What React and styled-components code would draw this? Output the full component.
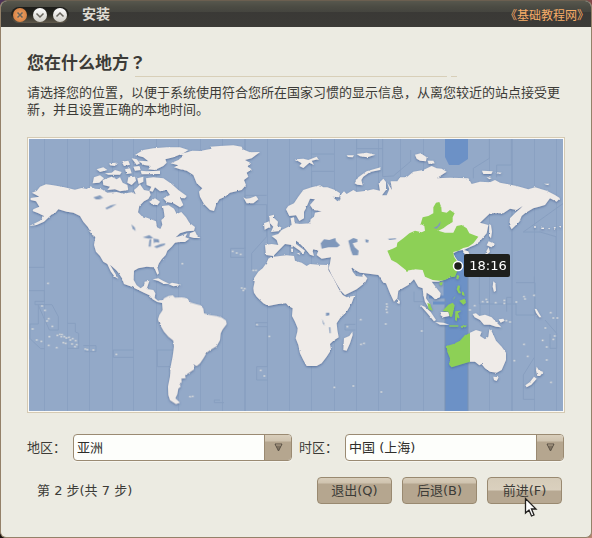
import React from "react";
import styled, { createGlobalStyle } from "styled-components";

const GlobalStyle = createGlobalStyle`
  * { box-sizing: border-box; }
  body {
    margin: 0;
    background: linear-gradient(90deg, #4d3357, #824748) top / 100% 50px no-repeat,
      linear-gradient(90deg, #1a1410, #b98670);
    font-family: "DejaVu Sans", "Noto Sans CJK SC", sans-serif;
    font-size: 13px;
    line-height: 17px;
    color: #3c3b37;
  }
`;

const Window = styled.div`
  min-height: 100vh;
  display: flex;
  flex-direction: column;
  border: 1px solid #948169;
  border-top-color: #6b5f50;
  border-radius: 7px 7px 6px 6px;
  background: #ecebe2;
  overflow: hidden;
`;

const TitleBar = styled.header`
  height: 26px;
  flex: none;
  display: flex;
  align-items: center;
  padding: 0 2px 0 10px;
  background: linear-gradient(#57574d 0, #4b4b43 6px, #45453f 11px, #3a3936 11px, #3c3b37 100%);
`;

const WindowControls = styled.div`
  display: flex;
  gap: 6px;
  padding: 1px 2px;
  margin-top: 1px;
  border-radius: 10px;
  background: linear-gradient(#1d1d1a 0, #25251f 45%, #5f584b 100%);
`;

const ControlButton = styled.button`
  width: 14px;
  height: 14px;
  padding: 0;
  border: 0;
  border-radius: 50%;
  display: flex;
  align-items: center;
  justify-content: center;
  background: ${(p) =>
    p.$close ? "radial-gradient(#efa468, #cf7637)" : "linear-gradient(#fff, #cfcdc6)"};
`;

const WindowTitle = styled.h1`
  margin: 0 auto 0 13px;
  font-size: 14px;
  line-height: 20px;
  font-weight: 700;
  color: #dfdbd2;
`;

const SiteMark = styled.span`
  margin-top: 5px;
  font-size: 12px;
  color: #f7ad68;
`;

const Page = styled.main`
  flex: 1;
  display: flex;
  flex-direction: column;
  padding: 24px 26px 16px;
`;

const Question = styled.h2`
  margin: 0;
  font-family: "DejaVu Sans", "Noto Sans CJK TC", sans-serif;
  font-size: 17px;
  line-height: 24px;
  font-weight: 700;
`;

const Rule = styled.hr`
  width: 60%;
  height: 1px;
  margin: 1px auto 7px;
  border: 0;
  background: linear-gradient(90deg, #d8cfb8 97%, transparent 97%, transparent 98%, #d8cfb8 98%);
`;

const Hint = styled.p`
  margin: 0 0 19px;
`;

const MapFrame = styled.div`
  border: 1px solid #d5cab3;
  padding: 1px;
  background: #fbfaf7;
`;

const MapSvg = styled.svg`
  display: block;
  width: 100%;
  height: auto;
`;

const Fields = styled.div`
  display: grid;
  grid-template-columns: auto 1fr auto 1fr;
  align-items: center;
  column-gap: 7px;
  margin-top: 21px;
  padding-right: 1px;
`;

const FieldLabel = styled.label`
  width: 39px;
  white-space: nowrap;
`;

const Combo = styled.div`
  display: grid;
  grid-template-columns: 1fr 27px;
  height: 27px;
  border: 1px solid #9a8a72;
  border-radius: 4px;
  background: #fdfefb;
  box-shadow: 0 1px 0 #f7f6f0;
  overflow: hidden;
`;

const ComboSelect = styled.select`
  grid-area: 1 / 1 / 2 / 3;
  appearance: none;
  min-width: 0;
  padding: 0 31px 0 3px;
  border: 0;
  background: transparent;
  color: #2f2e2b;
  font: inherit;
  outline: 0;
`;

const ComboArrow = styled.span`
  grid-area: 1 / 2;
  display: flex;
  align-items: center;
  justify-content: center;
  border-left: 1px solid #9a8a72;
  background: linear-gradient(#d9cebb 0, #cfc3af 6px, #b5a68f 7px, #b5a68f 100%);
  pointer-events: none;
`;

const Footer = styled.footer`
  display: flex;
  align-items: center;
  justify-content: space-between;
  margin-top: 16px;
  padding: 0 3px 0 10px;
`;

const Actions = styled.div`
  display: flex;
  gap: 10px;
`;

const ActionSlot = styled.div`
  position: relative;
`;

const ActionButton = styled.button`
  width: 75px;
  height: 27px;
  padding: 0;
  border: 1px solid #998970;
  border-radius: 4px;
  color: #3c3b37;
  font: inherit;
  background: ${(p) =>
    p.$hot
      ? "linear-gradient(#d6ccb9 0, #dad0be 12px, #b7a892 13px, #b7a892 100%)"
      : "linear-gradient(#d8cdba 0, #cfc3af 5px, #b5a68f 6px, #b5a68f 100%)"};
`;

const Cursor = styled.svg`
  position: absolute;
  left: 37px;
  top: 20px;
  pointer-events: none;
`;

/* Map shapes use units of a third of a map pixel; dx and dy place each chart sheet. */
const landSheets = [
  {
    dx: 0, dy: 0,
    shapes: [
      "36 188 50 183 60 170 78 163 100 166 130 171 165 179 185 174 200 177 212 169 225 176 245 178 262 188 290 186 310 191 335 187 347 193 342 180 352 172 360 163 372 180 388 183 392 195 385 207 372 214 358 228 354 247 365 258 385 265 408 274 411 292 421 297 427 284 424 270 434 262 431 240 428 228 446 226 462 236 470 252 484 246 498 262 508 278 525 291 522 302 500 304 480 310 467 322 482 318 502 310 496 322 508 326 495 336 478 336 465 338 455 350 442 362 437 375 425 388 417 400 412 412 417 430 412 434 405 418 400 412 380 410 355 415 342 422 341 450 350 466 362 475 372 467 374 455 388 452 384 465 380 477 400 480 406 490 404 504 414 512 428 510 440 516 430 520 412 516 398 508 388 496 372 488 355 480 335 470 312 462 306 445 295 428 288 420 270 404 284 428 295 446 284 440 272 424 262 402 250 395 240 378 228 365 222 345 226 322 212 305 203 290 190 275 180 258 160 248 140 245 115 238 105 250 94 254 84 264 72 275 50 285 28 288 60 272 72 258 55 250 38 243 40 238 58 230 48 214 32 210 32 204 58 200",
      "345 75 370 60 400 55 440 52 480 52 505 60 490 70 460 82 436 88 440 98 430 108 405 120 385 118 392 108 372 105 355 92 385 94 370 82",
      "362 122 380 124 420 122 420 132 365 133", "378 145 400 142 430 145 455 162 475 180 500 198 495 205 480 204 490 225 480 232 460 220 440 216 430 205 450 195 440 180 420 184 405 172 398 185 388 182 394 170 380 165",
      "248 150 275 140 290 148 300 142 308 158 322 165 325 180 300 184 285 178 262 180 270 170 250 165", "222 142 240 136 252 145 238 158 218 160",
      "255 130 275 128 285 120 305 126 300 134 265 134", "230 118 250 112 262 120 240 126", "268 100 290 98 285 108 270 106", "305 95 325 92 330 104 312 108", "335 85 350 88 360 100 350 105", "340 110 358 108 362 120 345 122", "315 118 330 115 335 130 320 132", "325 142 345 140 348 152 335 165 322 158", "352 145 370 140 370 155 356 162", "388 215 405 205 420 215 412 226 395 222", "510 310 525 304 530 314 541 324 522 324 508 320", "205 300 218 308 230 320 218 316",
      "398 448 415 445 430 453 448 461 432 462 415 453", "446 463 456 458 472 461 482 466 460 469"
    ]
  },
  {
    dx: 390, dy: 0,
    shapes: [
      "62 100 85 90 100 78 90 72 115 66 125 62 150 63 185 56 180 50 210 48 250 46 275 50 278 58 300 67 330 66 305 85 285 90 300 98 293 110 305 118 290 128 295 140 282 150 288 165 275 180 240 188 225 200 208 208 198 225 192 243 180 240 162 222 150 200 147 185 157 175 140 160 130 135 110 122 90 118 72 112 85 106",
      "280 202 288 206 300 205 318 198 325 208 310 220 290 220", "435 88 460 86 475 90 500 80 505 88 485 92 492 105 478 98 460 114 448 108 455 100", "358 258 372 254 372 264 384 275 382 288 394 292 390 303 363 306 370 290 360 280", "342 280 358 274 361 290 344 299", "423 346 429 346 428 352 424 352", "423 356 429 356 429 366 424 366", "440 370 452 368 450 374"
    ]
  },
  {
    dx: 390, dy: 420,
    shapes: ["36 96 42 85 55 78 68 76 75 83 95 82 110 84 122 98 140 103 152 106 160 116 162 130 180 135 200 138 215 143 228 152 230 162 218 178 212 190 210 210 200 228 180 240 170 248 162 262 150 280 140 288 132 284 132 298 118 308 105 316 107 324 94 326 95 338 88 340 92 350 85 356 82 372 76 385 90 398 78 402 60 390 55 375 54 350 60 320 62 290 68 260 72 230 70 212 55 200 42 185 28 160 24 148 28 135 38 120"]
  },
  {
    dx: 690, dy: 0,
    shapes: [
      "62 382 90 378 110 376 132 378 135 392 155 398 170 408 180 402 205 404 235 405 235 420 250 445 265 475 278 495 290 502 313 497 305 520 290 545 270 565 260 580 262 600 266 622 250 632 240 642 243 660 230 680 215 700 200 708 170 708 160 690 150 670 145 645 137 625 142 605 143 595 135 575 126 558 128 535 115 528 108 520 85 522 55 528 40 520 20 500 12 488 10 475 14 455 12 445 25 425 38 415 50 398 55 386",
      "307 605 308 615 300 640 290 662 280 660 282 625 298 618",
      "45 345 65 342 85 345 80 330 65 318 85 312 95 300 115 290 125 285 122 265 132 262 134 280 150 282 180 280 182 268 192 260 195 248 215 244 190 240 180 225 195 208 180 206 168 235 162 245 162 265 148 273 138 256 118 258 108 238 115 228 132 220 145 200 160 180 185 172 210 166 220 172 232 172 255 180 270 190 268 202 248 200 262 214 272 208 270 198 282 184 290 192 310 180 320 186 350 182 370 178 390 182 386 160 400 146 408 156 408 180 396 196 410 196 418 178 412 158 426 180 422 154 442 154 450 142 470 142 490 125 520 120 545 108 560 115 575 116 590 125 560 145 600 143 655 145 665 162 690 155 720 157 735 150 750 158 770 162 800 168 835 178 855 172 890 182 915 195 930 205 920 215 900 205 885 225 850 235 825 250 815 258 808 275 785 298 778 285 780 265 795 250 812 235 818 228 800 240 780 236 760 250 720 250 690 278 715 285 710 310 688 335 675 345 662 350 642 360 655 364 660 378 648 380 638 360 625 362 610 370 615 380 625 395 623 415 615 435 600 442 580 450 565 455 545 455 560 475 572 490 570 502 555 508 545 498 530 488 528 505 538 520 545 540 535 532 525 515 520 495 518 475 505 470 492 448 475 465 445 482 442 505 432 515 420 490 408 460 400 458 385 435 345 430 330 428 315 420 303 410 308 425 318 438 335 440 340 432 352 445 345 458 320 478 285 495 275 485 262 465 245 435 236 415 240 400 243 382 215 386 200 375 205 362 190 358 188 364 192 378 180 374 165 356 145 337 138 332 138 342 165 362 158 372 150 362 125 345 105 342 85 362 70 378 48 375",
      "314 160 325 142 350 124 392 112 390 120 360 126 340 140 334 150 338 166 322 164", "290 76 312 76 308 82 294 81", "320 72 350 68 376 74 352 82 330 79", "495 74 512 70 530 82 528 94 510 92 500 86", "533 92 550 92 554 100 536 102",
      "442 506 450 514 448 522 441 518"
    ]
  },
  {
    dx: 1110, dy: 0,
    shapes: ["298 282 303 286 306 305 303 325 297 318", "296 334 315 342 304 352 290 346", "296 352 300 366 284 378 290 362", "276 122 308 124 304 132 280 132", "315 127 335 128 330 132", "290 141 305 144 298 148", "462 161 478 161 474 166", "432 289 438 289 438 293 432 293", "454 293 462 293 462 297 454 297", "474 294 480 294 478 298", "491 291 498 292 494 297", "507 288 513 288 512 293"]
  },
  {
    dx: 1110, dy: 420,
    shapes: [
      "240 188 258 180 275 185 270 198 285 208 295 200 298 178 304 182 310 194 318 212 335 230 348 248 348 270 335 300 320 308 300 305 285 295 275 282 268 286 255 275 240 275",
      "310 320 326 322 320 333 312 330", "440 290 446 300 460 306 450 318 442 318 438 300", "432 320 440 326 424 344 410 352 406 346 420 336", "248 132 258 130 268 138 285 134 305 142 318 156 334 172 318 170 300 164 282 164 270 150 254 142", "90 104 104 110 122 126 138 150 132 154 112 130", "136 156 160 158 178 164 150 164", "152 126 175 126 178 138 160 142 152 136",
      "434 116 440 118 454 142 448 142 438 128", "310 34 316 40 318 62 312 66 308 50", "326 148 340 146 344 152 332 158"
    ]
  }
];

const greenSheets = [
  {
    dx: 1110, dy: 0,
    shapes: ["-8 362 8 356 20 350 22 338 40 325 58 310 75 302 95 307 105 302 103 288 92 282 98 262 115 258 130 250 130 232 138 218 148 216 154 232 155 245 170 248 180 240 194 250 188 262 188 276 172 286 160 295 145 302 165 308 190 308 200 288 215 285 230 295 238 310 265 320 250 340 235 350 220 354 205 362 190 366 192 380 202 395 203 420 195 440 180 442 165 450 148 452 128 450 105 440 98 420 75 418 50 422 20 398 4 390"]
  },
  {
    dx: 1110, dy: 420,
    shapes: [
      "240 190 225 195 210 212 190 222 170 228 172 245 180 265 178 285 185 292 215 283 240 275", "112 98 120 102 128 122 116 118", "158 122 175 104 188 98 194 106 190 124 186 140 180 140 176 126", "204 46 210 48 208 60 214 70 206 70 200 58", "216 64 222 68 224 78 216 74", "208 92 224 86 228 98 220 104", "196 124 214 122 204 130 210 148 202 142 200 154 195 150", "201 14 208 18 204 30 199 26", "148 38 158 36 156 46 150 46", "188 90 196 78 194 84", "178 166 205 166 205 170 178 170", "212 168 230 166 228 170 215 174"
    ]
  }
];

const waterShapes = [
  [0, 0, "220 202 240 196 250 204 236 204 246 208 228 208"], [0, 0, "256 234 272 226 290 222 274 232 260 238"], [0, 0, "334 283 344 292 347 303 338 296"], [0, 0, "368 322 388 315 400 324 386 326"], [0, 0, "388 330 394 326 392 350 386 350"], [0, 0, "400 326 416 328 418 338 406 336 402 340"], [0, 0, "402 350 422 342 436 340 434 345 410 354"],
  [690, 0, "212 340 222 328 238 330 256 324 258 334 270 346 262 352 235 352 215 356"], [690, 0, "295 332 310 324 322 328 322 336 308 340 314 352 326 362 324 376 308 376 302 360"], [690, 0, "346 328 356 330 354 338 347 337"], [690, 0, "414 326 438 325 438 328 418 330"], [690, 420, "228 128 238 128 238 136 228 138"], [690, 420, "216 146 222 160 224 168 219 160"], [690, 420, "237 172 241 172 242 190 239 190"], [1110, 0, "130 294 142 288 152 274 150 286 140 296"]
];

const plainMeridians = [44, 67, 89, 112, 133, 156, 178, 200, 222, 267, 289, 311, 334, 356, 378, 400, 423, 489, 534, 556];

const zoneBorders = [
  "M27 412H73V330", "M740 196H675V224H740V320L695 370V420", "M677 355H632V382H677", "M872 72H942M942 124H875V180",
  "M1010 27V56H1088M1088 27V140L1120 138 1172 94V60", "M1474 27V105H1430V142M1408 27V85L1360 115V145", "M1630 220L1510 306H1560L1608 320V420",
  "M27 482H73V514H45V524H96L115 560V600H88L70 560 55 526V582H30V626L62 656H73", "M142 655H176V610L166 606V580H142", "M190 647H228V665H194", "M340 660H280V682H340", "M475 660H412V710H475", "M600 810H583V818H612", "M742 578H707V590H742V710H710V750H742", "M1006 583H975V600H1006", "M1378 438V522H1488V555H1545V458H1488M1543 458V440M1460 545V502H1476", "M1575 570L1610 610V655H1590V612", "M1543 682L1510 735V808H1543", "M1182 485V515H1210M1380 522V560"
];

const islets = [
  [66, 528], [75, 541], [86, 566], [81, 573], [97, 589], [38, 597], [50, 630], [64, 634], [88, 620], [86, 646], [110, 653], [112, 616], [120, 613], [126, 614], [124, 620], [133, 620], [139, 624], [147, 622], [151, 630], [158, 626], [167, 632], [130, 638], [137, 640], [156, 642], [170, 644], [165, 650], [196, 657], [202, 659], [220, 660], [289, 673], [84, 460], [487, 401],
  [638, 364], [650, 369], [662, 373], [700, 421], [708, 421], [665, 474], [670, 481], [674, 476], [711, 584], [748, 619], [722, 721], [733, 738], [510, 800], [518, 799], [943, 772], [1000, 768], [1084, 786], [982, 590], [1022, 569], [1023, 643], [1032, 640], [1097, 582], [1100, 522], [1101, 530], [1099, 538], [1101, 547], [1205, 603],
  [1388, 515], [1399, 508], [1402, 516], [1427, 518], [1453, 511], [1453, 520], [1489, 516], [1512, 500], [1515, 507], [1542, 496], [1592, 548], [1600, 564], [1612, 564], [1576, 594], [1568, 631], [1604, 618], [1600, 628], [1512, 643], [1580, 690], [1593, 757], [1523, 679], [1483, 692], [1364, 527], [1350, 540], [1459, 572], [1470, 576], [1580, 651]
];

function Sheets({ sheets }) {
  return sheets.map((sheet, i) => (
    <g key={i} transform={`translate(${sheet.dx} ${sheet.dy})`}>
      {sheet.shapes.map((points, j) => <polygon key={j} points={points} />)}
    </g>
  ));
}

function WorldMap() {
  return (
    <MapSvg viewBox="0 0 534 272" role="img" aria-label="时区地图">
      <defs>
        <filter id="coast" x="-5%" y="-5%" width="110%" height="110%">
          <feTurbulence type="fractalNoise" baseFrequency="0.3" numOctaves="2" seed="4" result="noise" />
          <feDisplacementMap in="SourceGraphic" in2="noise" scale="2" xChannelSelector="R" yChannelSelector="G" result="ragged" />
          <feDropShadow in="ragged" dx="0" dy="1" stdDeviation="1" floodColor="#4f6b96" floodOpacity="0.85" />
        </filter>
      </defs>
      <rect width="534" height="272" fill="#93a9c8" />
      <g stroke="#8aa1c2" strokeWidth="1">
        {plainMeridians.map((x) => <path key={x} d={`M${x - 29 + 0.5} 0V272`} />)}
        <path strokeWidth="2" d="M216 0V272M483 0V272" />
      </g>
      <path d="M416 0H439V20L430 26H420L416 18ZM416 90H439V272H416Z" fill="#6c91c6" />
      <path d="M439 110V272M416 150V272" stroke="#7b92b3" fill="none" />
      <path d="M404 164H416M416 131V158H400" stroke="#6c91c6" strokeWidth="3" fill="none" />
      <g transform="translate(-9 -9) scale(0.33333)">
        <g fill="none" stroke="#889fc0" strokeWidth="3">
          {zoneBorders.map((d) => <path key={d} d={d} />)}
        </g>
      </g>
      <g filter="url(#coast)">
        <g transform="translate(-9 -9) scale(0.33333)">
          <g fill="#efebe8"><Sheets sheets={landSheets} /></g>
          <g fill="#8dd057"><Sheets sheets={greenSheets} /></g>
        </g>
      </g>
      <g transform="translate(-9 -9) scale(0.33333)">
        <g fill="#8098bb">
          {waterShapes.map(([x, y, points]) => (
            <polygon key={points} points={points} transform={`translate(${x} ${y})`} />
          ))}
        </g>
        <g fill="#d9dbdd" stroke="#8ea3c0" strokeWidth="1">
          {islets.map(([x, y]) => <rect key={`${x}-${y}`} x={x - 3} y={y - 3} width="6" height="6" />)}
        </g>
      </g>
      <circle cx="429" cy="127" r="4.5" fill="#1e1f1c" stroke="#fff" strokeWidth="1.5" />
      <rect x="435" y="115" width="46" height="23" rx="2" fill="#1e1f1c" />
      <text x="459" y="131" textAnchor="middle" fontSize="13" fill="#fff">18:16</text>
    </MapSvg>
  );
}

function ComboBox({ id, value }) {
  return (
    <Combo>
      <ComboArrow>
        <svg width="9" height="9" viewBox="0 0 9 9" aria-hidden="true">
          <path d="M1 1H8L4.5 8Z" fill="#807361" stroke="#5a5145" />
          <path d="M2 2H7" stroke="#b5a68f" />
        </svg>
      </ComboArrow>
      <ComboSelect id={id} defaultValue={value}>
        <option>{value}</option>
      </ComboSelect>
    </Combo>
  );
}

function ControlGlyph({ d }) {
  return (
    <svg width="10" height="10" viewBox="0 0 10 10" fill="none" stroke="#67645c" strokeWidth="1.5" aria-hidden="true">
      <path d={d} />
    </svg>
  );
}

export default function App() {
  return (
    <>
      <GlobalStyle />
      <Window>
        <TitleBar>
          <WindowControls>
            <ControlButton $close aria-label="关闭"><ControlGlyph d="M2.5 2.5L7.5 7.5M7.5 2.5L2.5 7.5" /></ControlButton>
            <ControlButton aria-label="最小化"><ControlGlyph d="M1.5 3.5L5 7L8.5 3.5" /></ControlButton>
            <ControlButton aria-label="最大化"><ControlGlyph d="M1.5 6.5L5 3L8.5 6.5" /></ControlButton>
          </WindowControls>
          <WindowTitle>安装</WindowTitle>
          <SiteMark>《基础教程网》</SiteMark>
        </TitleBar>
        <Page>
          <Question>您在什么地方？</Question>
          <Rule />
          <Hint>请选择您的位置，以便于系统使用符合您所在国家习惯的显示信息，从离您较近的站点接受更新，并且设置正确的本地时间。</Hint>
          <MapFrame><WorldMap /></MapFrame>
          <Fields>
            <FieldLabel htmlFor="region">地区：</FieldLabel>
            <ComboBox id="region" value="亚洲" />
            <FieldLabel htmlFor="zone">时区：</FieldLabel>
            <ComboBox id="zone" value="中国 (上海)" />
          </Fields>
          <Footer>
            <span>第 2 步(共 7 步)</span>
            <Actions>
              <ActionButton>退出(Q)</ActionButton>
              <ActionButton>后退(B)</ActionButton>
              <ActionSlot>
                <ActionButton $hot>前进(F)</ActionButton>
                <Cursor width="14" height="21" viewBox="0 0 14 21" aria-hidden="true">
                  <path d="M1.5 1.5V16L5 13L7.5 19L10 18L7.5 12H12Z" fill="#fff" stroke="#22211f" strokeWidth="1.3" />
                </Cursor>
              </ActionSlot>
            </Actions>
          </Footer>
        </Page>
      </Window>
    </>
  );
}
